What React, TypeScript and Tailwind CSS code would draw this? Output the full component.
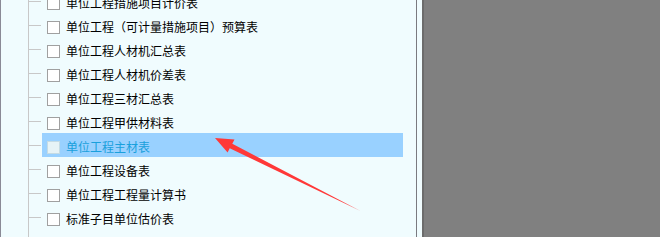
const items = [
  "单位工程措施项目计价表",
  "单位工程（可计量措施项目）预算表",
  "单位工程人材机汇总表",
  "单位工程人材机价差表",
  "单位工程三材汇总表",
  "单位工程甲供材料表",
  "单位工程主材表",
  "单位工程设备表",
  "单位工程工程量计算书",
  "标准子目单位估价表",
];

const selected = 6;

function Row({ label, active }: { label: string; active: boolean }) {
  return (
    <div className="flex h-[24px] items-start">
      <div className="mt-[12px] h-px w-[12px] bg-[#c8c8c8]" />
      <div
        className={
          "ml-px flex h-[24px] w-[361px] items-center pl-[5px] pt-[4px] " +
          (active ? "bg-[#99d1ff]" : "")
        }
      >
        <span
          className={
            "h-[13px] w-[13px] shrink-0 border " +
            (active ? "border-[#c4dbe4] bg-[#e6f3f6]" : "border-[#a0a0a0] bg-white")
          }
        />
        <span
          className={
            "ml-[6px] whitespace-nowrap text-[12px] leading-none " +
            (active ? "text-[#1aa0dc]" : "text-black")
          }
        >
          {label}
        </span>
      </div>
    </div>
  );
}

export default function App() {
  return (
    <div
      className="relative flex h-[237px] w-[660px] overflow-hidden bg-[#808080]"
      style={{ fontFamily: '"Noto Sans CJK SC", "Noto Sans", sans-serif' }}
    >
      <div className="h-full w-[416px] border-l border-[#8a8a96] bg-[#f0fcfe]">
        <div className="ml-[27px] mt-[-11px] h-[260px] border-l border-[#c8c8c8]">
          {items.map((label, i) => (
            <Row key={label} label={label} active={i === selected} />
          ))}
        </div>
      </div>
      <div className="h-full w-px bg-[#7a7a80]" />
      <div className="h-full w-[5px] bg-[#f0fcfe]" />
      <div className="h-full w-[2px] bg-[#6c6c6c]" />
      <div className="h-full flex-1" />

      <svg className="pointer-events-none absolute left-0 top-0" width="660" height="237">
        <polygon
          points="215,138 234.5,139.5 232.3,143.8 360.5,211 229.7,148.2 227.6,152.6"
          fill="#ff3838"
        />
      </svg>
    </div>
  );
}
